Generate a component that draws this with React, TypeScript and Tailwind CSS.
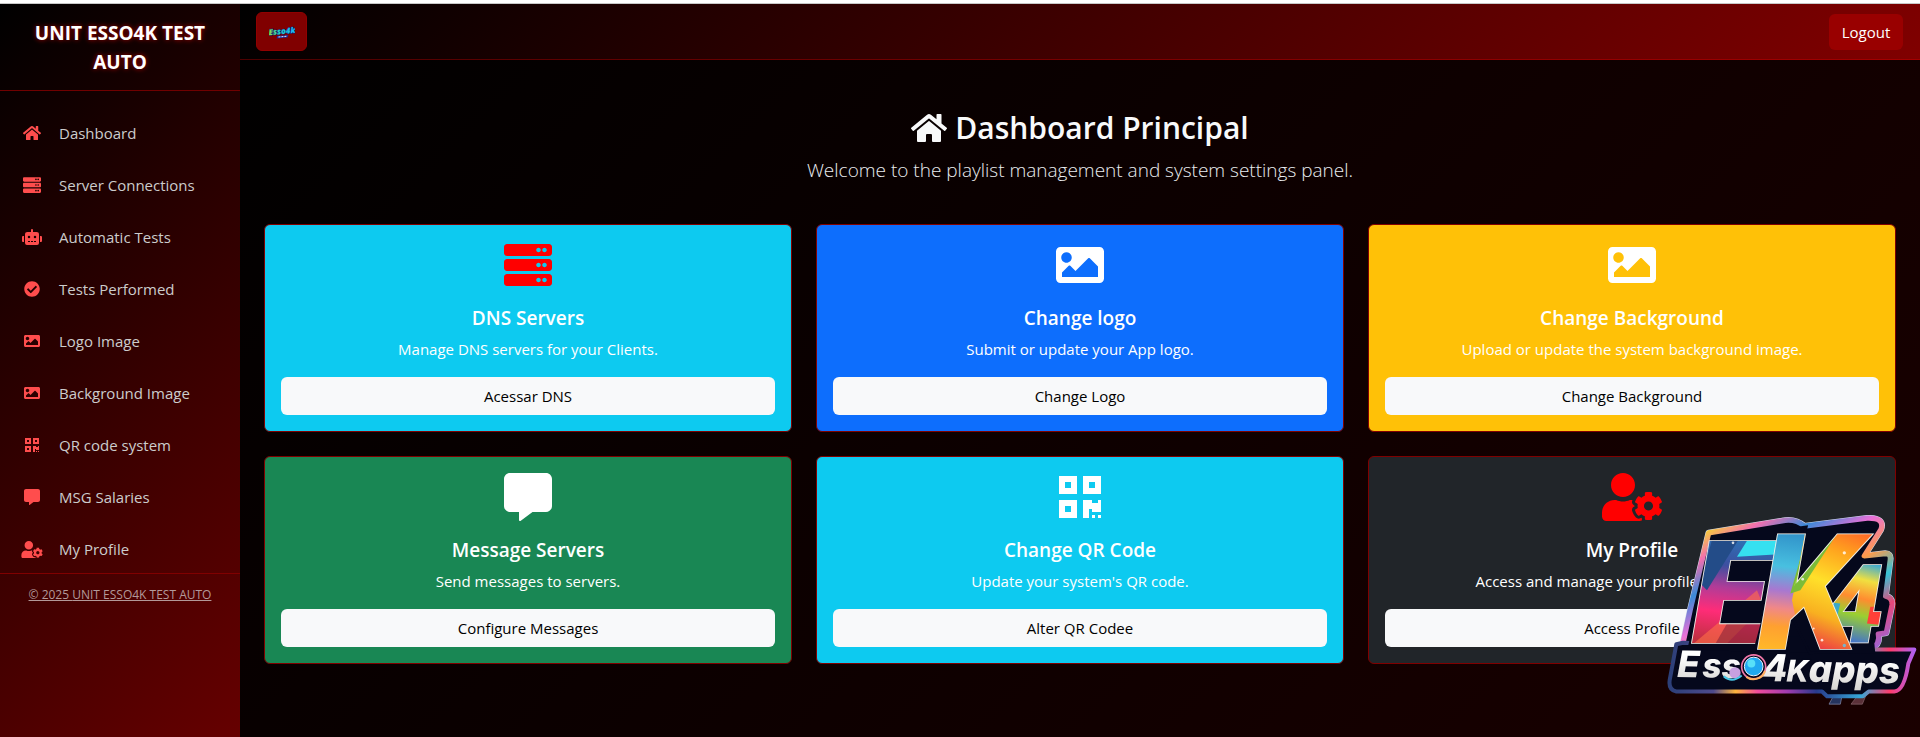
import type { IconType } from "react-icons";
import {
  FaCheckCircle,
  FaCommentAlt,
  FaHome,
  FaImage,
  FaQrcode,
  FaRobot,
  FaServer,
  FaUserCog,
} from "react-icons/fa";

const APP_NAME = "UNIT ESSO4K TEST AUTO";

interface NavItem {
  icon: IconType;
  label: string;
  href: string;
  size?: string;
}

const navItems: NavItem[] = [
  { icon: FaHome, label: "Dashboard", href: "#dashboard", size: "h-4 w-[18px]" },
  { icon: FaServer, label: "Server Connections", href: "#servers", size: "h-[18px] w-[18px]" },
  { icon: FaRobot, label: "Automatic Tests", href: "#tests", size: "h-4 w-5" },
  { icon: FaCheckCircle, label: "Tests Performed", href: "#performed" },
  { icon: FaImage, label: "Logo Image", href: "#logo" },
  { icon: FaImage, label: "Background Image", href: "#background" },
  { icon: FaQrcode, label: "QR code system", href: "#qrcode" },
  { icon: FaCommentAlt, label: "MSG Salaries", href: "#messages" },
  { icon: FaUserCog, label: "My Profile", href: "#profile", size: "h-[17px] w-[22px]" },
];

interface ActionCardProps {
  icon: IconType;
  title: string;
  text: string;
  action: string;
  color: string;
  iconStyle?: string;
}

const cards: ActionCardProps[] = [
  {
    icon: FaServer,
    title: "DNS Servers",
    text: "Manage DNS servers for your Clients.",
    action: "Acessar DNS",
    color: "bg-[#0dcaf0]",
    iconStyle: "w-12 text-[#ff0000]",
  },
  {
    icon: FaImage,
    title: "Change logo",
    text: "Submit or update your App logo.",
    action: "Change Logo",
    color: "bg-[#0d6efd]",
  },
  {
    icon: FaImage,
    title: "Change Background",
    text: "Upload or update the system background image.",
    action: "Change Background",
    color: "bg-[#ffc107]",
  },
  {
    icon: FaCommentAlt,
    title: "Message Servers",
    text: "Send messages to servers.",
    action: "Configure Messages",
    color: "bg-[#198754]",
  },
  {
    icon: FaQrcode,
    title: "Change QR Code",
    text: "Update your system's QR code.",
    action: "Alter QR Codee",
    color: "bg-[#0dcaf0]",
  },
  {
    icon: FaUserCog,
    title: "My Profile",
    text: "Access and manage your profile information.",
    action: "Access Profile",
    color: "bg-[#212529]",
    iconStyle: "w-[60px] text-[#ff0000]",
  },
];

function ActionCard({ icon: Icon, title, text, action, color, iconStyle = "w-12 text-white" }: ActionCardProps) {
  return (
    <section className={`rounded-md border border-[#800000] p-4 text-center text-white ${color}`}>
      <Icon className={`mx-auto mb-[17px] h-12 ${iconStyle}`} />
      <h2 className="mb-[7px] text-[19px] leading-6 font-semibold">{title}</h2>
      <p className="mb-4 text-[15px] leading-6">{text}</p>
      <button type="button" className="h-[38px] w-full rounded-md bg-[#f8f9fa] text-[15px] text-black">
        {action}
      </button>
    </section>
  );
}

function Sidebar() {
  return (
    <aside className="w-60 shrink-0 bg-[linear-gradient(135deg,#000000,#660000)]">
      <div className="border-b border-[#700000] px-5 pt-[15px] pb-[13px] text-center text-[19px] leading-[29px] font-bold text-white [text-shadow:0_0_5px_#b30000]">
        {APP_NAME}
      </div>
      <nav className="flex flex-col gap-[6px] pt-[19px] pb-px">
        {navItems.map(({ icon: Icon, label, href, size = "h-4 w-4" }) => (
          <a key={label} href={href} className="flex h-[46px] items-center gap-[15px] px-5 text-[15px] text-[#cccccc]">
            <span className="flex w-6 shrink-0 justify-center text-[#ff4d4d]">
              <Icon className={size} />
            </span>
            {label}
          </a>
        ))}
      </nav>
      <footer className="border-t border-[#800000] py-[11px] text-center text-[12px] leading-5">
        <a href="#home" className="text-[#b39999] underline">
          © 2025 {APP_NAME}
        </a>
      </footer>
    </aside>
  );
}

function MiniLogo() {
  return (
    <svg viewBox="0 0 26 14" className="h-[14px] w-[26px]" role="img" aria-label="Esso4k">
      <defs>
        <linearGradient id="mini" x1="0" x2="1">
          <stop offset="0" stopColor="#9be23c" />
          <stop offset="0.35" stopColor="#20d0c0" />
          <stop offset="1" stopColor="#19b5ff" />
        </linearGradient>
      </defs>
      <g transform="rotate(-5 13 7)" fontFamily="Open Sans, sans-serif" fontWeight="800" fontStyle="italic" textAnchor="middle">
        <text x="13" y="9" fontSize="8" fill="url(#mini)" stroke="#0b1e7a" strokeWidth="1" paintOrder="stroke">
          Esso4k
        </text>
        <path d="M8 10.5h11l-1 2.500h-11z" fill="#1b2a9c" />
        <path d="M9 11.700h2m1 0h2m1 0h2" stroke="#d8e4ff" strokeWidth="1" />
      </g>
    </svg>
  );
}

const PLATE =
  "M205 128L425 92Q465 84 492 108L680 84Q735 82 722 118L672 197L735 190Q752 190 750 208L736 318Q758 322 755 345L738 428L714 432Q722 462 690 478L148 478L128 458L150 357Z";

// Sticker shown over the lower right corner of the page
function BrandSticker() {
  return (
    <svg
      viewBox="80 75 750 575"
      className="pointer-events-none fixed right-[3px] bottom-[30px] h-[192px] w-[250px]"
      role="img"
      aria-label="EK4 Esso4Kapps"
    >
      <defs>
        <linearGradient id="rim" x1="0" y1="0" x2="1" y2="1">
          <stop offset="0" stopColor="#4fc3e8" />
          <stop offset="0.1" stopColor="#f7d038" />
          <stop offset="0.2" stopColor="#f26fb0" />
          <stop offset="0.32" stopColor="#3a8ad8" />
          <stop offset="0.45" stopColor="#e870d8" />
          <stop offset="0.58" stopColor="#ff9a4a" />
          <stop offset="0.7" stopColor="#37c3d8" />
          <stop offset="0.82" stopColor="#e94878" />
          <stop offset="1" stopColor="#8a6cf0" />
        </linearGradient>
        <linearGradient id="base" x1="0" x2="1">
          <stop offset="0" stopColor="#2c3f78" />
          <stop offset="0.18" stopColor="#4f4a8c" />
          <stop offset="0.27" stopColor="#ffb43c" />
          <stop offset="0.36" stopColor="#f04c9c" />
          <stop offset="0.48" stopColor="#a23cb0" />
          <stop offset="0.6" stopColor="#283a8c" />
          <stop offset="0.78" stopColor="#36a8d8" />
          <stop offset="0.9" stopColor="#ff3c6c" />
          <stop offset="1" stopColor="#b060f0" />
        </linearGradient>
        <linearGradient id="letterE" gradientUnits="userSpaceOnUse" x1="300" y1="130" x2="260" y2="460">
          <stop offset="0" stopColor="#2a78b8" />
          <stop offset="0.3" stopColor="#3d4fa0" />
          <stop offset="0.5" stopColor="#b03c98" />
          <stop offset="0.72" stopColor="#ff2c78" />
          <stop offset="1" stopColor="#c03040" />
        </linearGradient>
        <linearGradient id="letterK" gradientUnits="userSpaceOnUse" x1="440" y1="120" x2="400" y2="480">
          <stop offset="0" stopColor="#2f8fc8" />
          <stop offset="0.3" stopColor="#48c0e0" />
          <stop offset="0.5" stopColor="#a878d0" />
          <stop offset="0.65" stopColor="#f08888" />
          <stop offset="0.8" stopColor="#ffa030" />
          <stop offset="1" stopColor="#ffb828" />
        </linearGradient>
        <linearGradient id="armK" gradientUnits="userSpaceOnUse" x1="680" y1="110" x2="540" y2="480">
          <stop offset="0" stopColor="#ff5a28" />
          <stop offset="0.25" stopColor="#ffa51e" />
          <stop offset="0.5" stopColor="#ffe02a" />
          <stop offset="0.75" stopColor="#f8b020" />
          <stop offset="1" stopColor="#ee3a44" />
        </linearGradient>
        <linearGradient id="digit4" gradientUnits="userSpaceOnUse" x1="700" y1="220" x2="640" y2="460">
          <stop offset="0" stopColor="#38a8d8" />
          <stop offset="0.22" stopColor="#f0e040" />
          <stop offset="0.45" stopColor="#ff8c30" />
          <stop offset="0.65" stopColor="#9ad030" />
          <stop offset="1" stopColor="#4070d0" />
        </linearGradient>
        <linearGradient id="silver" x1="0" y1="0" x2="0" y2="1">
          <stop offset="0.3" stopColor="#ffffff" />
          <stop offset="1" stopColor="#d4d2cf" />
        </linearGradient>
        <clipPath id="clipE">
          <text x="154" y="458" fontFamily="Roboto, sans-serif" fontWeight="900" fontStyle="italic" fontSize="430">E</text>
        </clipPath>
        <clipPath id="clipK">
          <text x="352" y="476" fontFamily="Roboto, sans-serif" fontWeight="900" fontStyle="italic" fontSize="485">K</text>
        </clipPath>
        <clipPath id="clip4">
          <text x="548" y="458" fontFamily="Roboto, sans-serif" fontWeight="900" fontStyle="italic" fontSize="325">4</text>
        </clipPath>
      </defs>

      <path d="M566 642L582 612H606L600 642Z" fill="#26345e" stroke="#8a90b0" strokeWidth="2" />
      <path d="M632 642L652 616L678 613L666 642Z" fill="#5a3038" stroke="#8a6870" strokeWidth="2" />
      <path d={PLATE} fill="#05081c" stroke="#cfd6e8" strokeWidth="19" strokeLinejoin="round" />
      <path d={PLATE} fill="#05081c" stroke="url(#rim)" strokeWidth="16" strokeLinejoin="round" />
      <path
        d="M108 462L128 458L700 478H822L804 520Q792 602 762 604H685L668 618H560L545 604H108Q84 600 88 570Z"
        fill="#05081c"
        stroke="url(#base)"
        strokeWidth="12"
        strokeLinejoin="round"
      />
      <path d="M150 440L700 440L705 490L140 480Z" fill="#05081c" />

      {/* each letter is a light outline with its colour shards clipped on top */}
      <g
        fill="#f4f2ea"
        stroke="#f4f2ea"
        strokeWidth="5"
        fontFamily="Roboto, sans-serif"
        fontWeight="900"
        fontStyle="italic"
      >
        <text x="154" y="458" fontSize="430">E</text>
        <text x="548" y="458" fontSize="325">4</text>
      </g>
      <g clipPath="url(#clipE)">
        <path d="M140 120H460V480H140Z" fill="url(#letterE)" />
        <path d="M340 120H460V190L290 200Z" fill="#36e0f0" />
        <path d="M220 130L300 140L200 300L180 280Z" fill="#234c88" />
        <path d="M160 460L350 300L370 350L250 470Z" fill="#ff7048" opacity="0.6" />
        <path d="M260 400L380 370V470H220Z" fill="#882438" opacity="0.6" />
      </g>
      <g clipPath="url(#clip4)">
        <path d="M500 200H780V480H500Z" fill="url(#digit4)" />
        <path d="M500 330L600 340L580 420H500Z" fill="#38a8c8" />
        <path d="M690 350H780V410L680 400Z" fill="#ff4038" />
      </g>
      {/* dark halo keeps the K apart from its neighbours */}
      <path d="M440 118L498 110L455 290L620 120L700 112L540 300L592 484L508 488L450 370L420 470L346 470Z" fill="#05081c" stroke="#05081c" strokeWidth="8" />
      <g fontFamily="Roboto, sans-serif" fontWeight="900" fontStyle="italic">
        <text x="352" y="476" fontSize="485" fill="#f4f2ea" stroke="#f4f2ea" strokeWidth="5">K</text>
      </g>
      <g clipPath="url(#clipK)">
        <path d="M340 100H780V500H340Z" fill="url(#letterK)" />
        <path d="M500 100H780V500H490L455 330Z" fill="url(#armK)" />
        <path d="M510 100H610L480 300L450 310Z" fill="#7cbc38" />
        <path d="M530 100H570L460 290Z" fill="#a8dc48" />
        <path d="M560 280L660 200L600 340Z" fill="#fff060" opacity="0.5" />
      </g>
      <g fill="#ffffff" opacity="0.8">
        <circle cx="278" cy="158" r="4" />
        <circle cx="612" cy="188" r="5" />
        <circle cx="487" cy="267" r="4" />
        <circle cx="545" cy="450" r="4" />
        <circle cx="520" cy="415" r="3" />
        <circle cx="612" cy="466" r="5" fill="#58c8f0" />
      </g>

      <g
        transform="rotate(1 440 560)"
        fontFamily="Inter, sans-serif"
        fontWeight="800"
        fontStyle="italic"
        fill="url(#silver)"
        stroke="#05081c"
        strokeWidth="8"
        strokeLinejoin="round"
        paintOrder="stroke"
      >
        <text x="110" y="566" fontSize="110">E</text>
        <text x="186" y="566" fontSize="100">ss</text>
        <text x="364" y="574" fontSize="112">4</text>
        <text x="438" y="574" fontSize="90">K</text>
        <text x="505" y="574" fontSize="110">apps</text>
      </g>
      <circle cx="284" cy="548" r="17" fill="#c8a0e0" />
      <path d="M250 558Q275 580 304 556" fill="none" stroke="#48c8e8" strokeWidth="6" />
      <circle cx="340" cy="530" r="36" fill="#05081c" stroke="#f078a8" strokeWidth="5" />
      <path d="M318 560A36 36 0 0 0 374 542" fill="none" stroke="#ffb060" strokeWidth="6" />
      <circle cx="340" cy="529" r="28" fill="#20a8f0" stroke="#e8f4ff" strokeWidth="3" />
      <circle cx="333" cy="520" r="12" fill="#58e0f8" />
    </svg>
  );
}

export default function App() {
  return (
    <div className="flex min-h-screen flex-col bg-black font-['Open_Sans','Noto_Sans',sans-serif]">
      <div className="h-1 border-b border-[#c8c8c8] bg-white" />
      <div className="flex grow">
        <Sidebar />
        <div className="flex min-w-0 grow flex-col bg-[linear-gradient(135deg,#000000,#1a0000)]">
          <header className="flex h-14 items-center justify-between border-b border-[#ff0000]/30 bg-[linear-gradient(135deg,#000000,#800000)] pr-[17px] pl-4">
            <button
              type="button"
              aria-label="Toggle menu"
              className="flex h-[39px] w-[51px] items-center justify-center rounded-md border border-[#900000] bg-[#800000]"
            >
              <MiniLogo />
            </button>
            <button type="button" className="h-9 w-[74px] rounded-md bg-[#990000] pt-px text-[15px] text-white">
              Logout
            </button>
          </header>
          <main className="px-6 pt-[49px]">
            <div className="mb-[39px] text-center">
              <h1 className="mb-2 flex items-center justify-center gap-2 text-[30px] leading-[38px] font-semibold text-[#f8f9fa]">
                <FaHome className="h-8 w-9" />
                Dashboard Principal
              </h1>
              <p className="text-[19px] leading-[30px] font-light text-[#e9ecef]">
                Welcome to the playlist management and system settings panel.
              </p>
            </div>
            <div className="grid grid-cols-3 gap-6">
              {cards.map((card) => (
                <ActionCard key={card.title} {...card} />
              ))}
            </div>
          </main>
        </div>
      </div>
      <BrandSticker />
    </div>
  );
}
